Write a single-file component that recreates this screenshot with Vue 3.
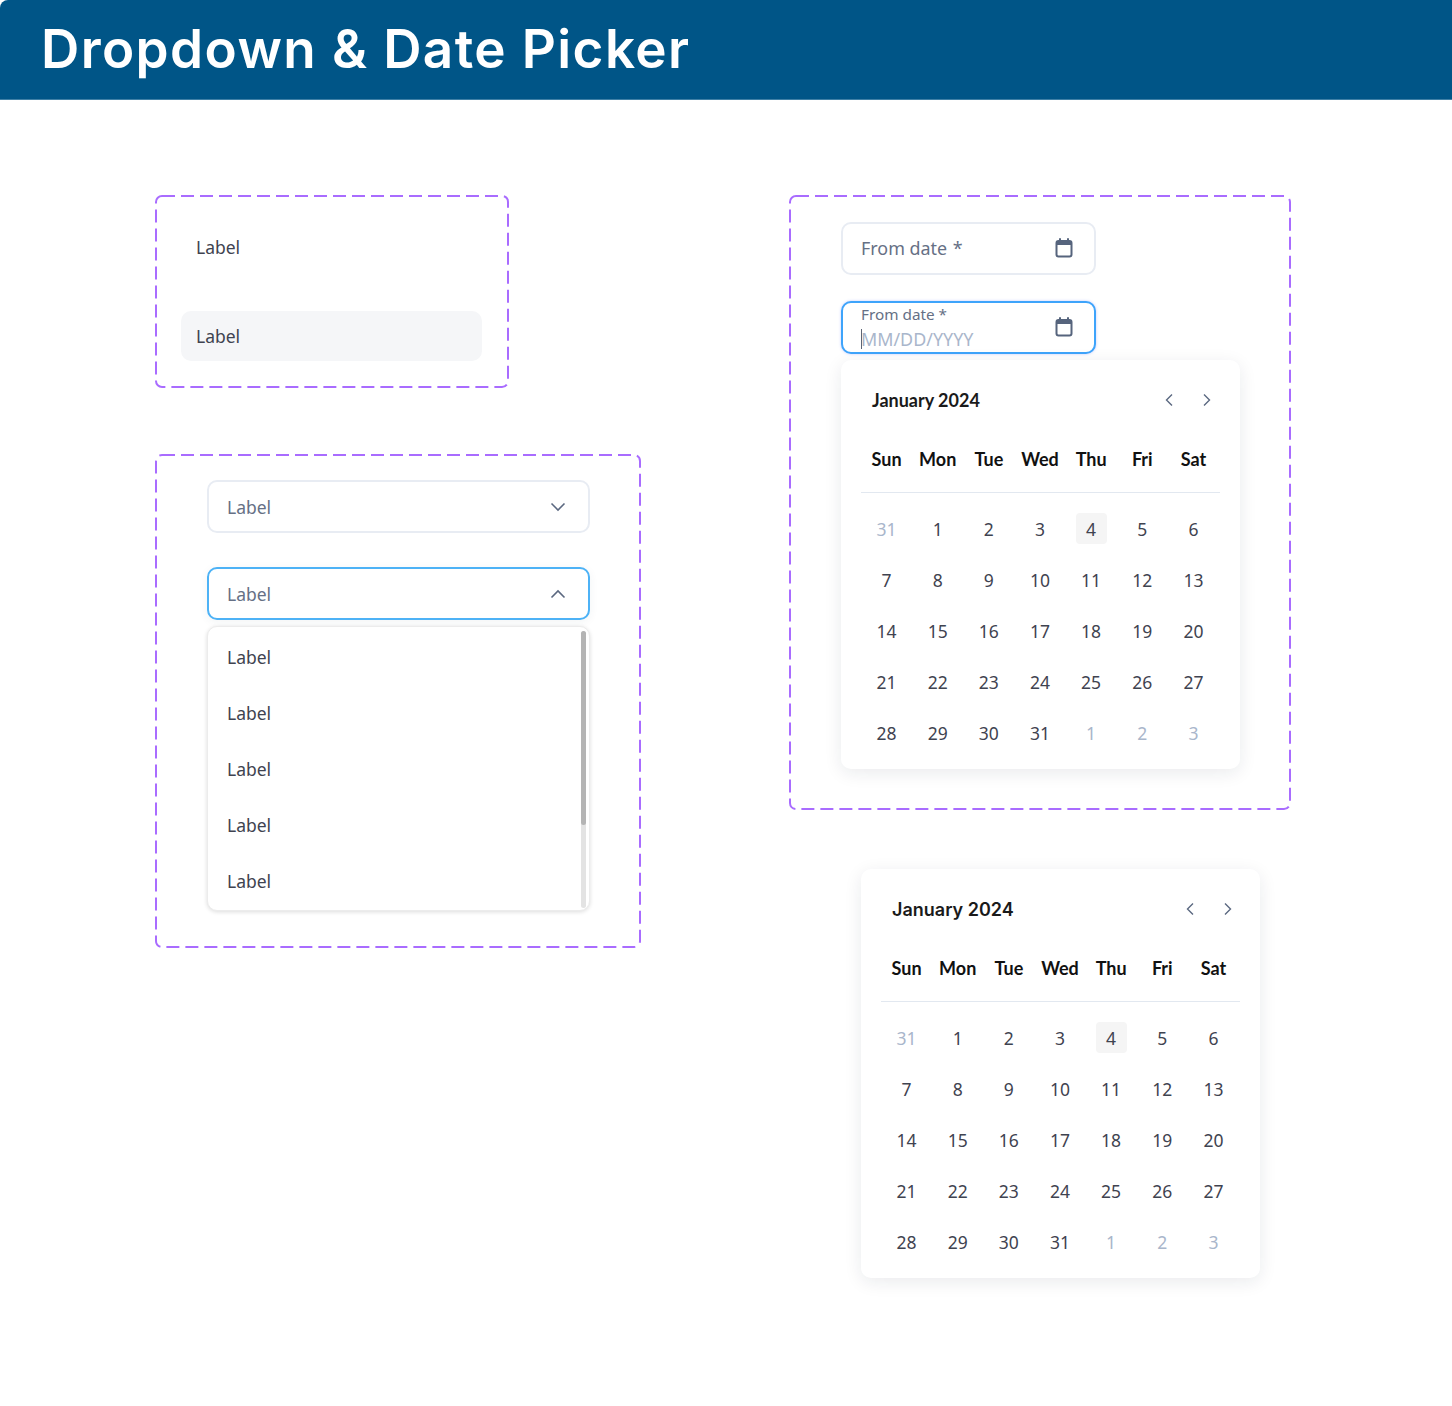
<script setup>
const weekdays = ["Sun", "Mon", "Tue", "Wed", "Thu", "Fri", "Sat"];

// january 2024, padded with the neighbouring months
const days = [];
days.push({ n: 31, muted: true });
for (let n = 1; n <= 31; n++) days.push({ n, today: n === 4 });
for (let n = 1; n <= 3; n++) days.push({ n, muted: true });

const options = ["Label", "Label", "Label", "Label", "Label"];
</script>

<template>
  <div class="page">
    <header class="banner">
      <h1>Dropdown &amp; Date Picker</h1>
    </header>

    <main class="board">
      <div class="col-left">
        <section class="frame menu-frame">
          <svg class="dash"><rect /></svg>
          <div class="menu-item">Label</div>
          <div class="menu-item hover">Label</div>
        </section>

        <section class="frame select-frame">
          <svg class="dash"><rect /></svg>
          <div class="select">
            <span>Label</span>
            <svg width="16" height="10" viewBox="0 0 16 10" fill="none">
              <path d="M1.5 1.5 8 8l6.5-6.5" stroke="#5b6880" stroke-width="1.6" />
            </svg>
          </div>
          <div class="select open">
            <span>Label</span>
            <svg width="16" height="10" viewBox="0 0 16 10" fill="none">
              <path d="M1.5 8.5 8 2l6.5 6.5" stroke="#5b6880" stroke-width="1.6" />
            </svg>
          </div>
          <div class="list">
            <div v-for="(opt, i) in options" :key="i" class="list-row">{{ opt }}</div>
            <div class="scroll-track"><div class="scroll-thumb"></div></div>
          </div>
        </section>
      </div>

      <div class="col-right">
        <section class="frame date-frame">
          <svg class="dash"><rect /></svg>
          <div class="date-input">
            <span class="date-label">From date <i>*</i></span>
            <svg class="cal-icon" width="20" height="20" viewBox="0 0 20 20" fill="none">
              <path d="M6 1v3M14 1v3" stroke="#56647d" stroke-width="2" stroke-linecap="round" />
              <rect x="2.500" y="3" width="15" height="15.500" rx="2" stroke="#56647d" stroke-width="2" />
              <path d="M2.500 5a2 2 0 0 1 2-2h11a2 2 0 0 1 2 2v2h-15z" fill="#56647d" />
            </svg>
          </div>
          <div class="date-input focused">
            <div class="date-stack">
              <span class="date-label small">From date <i>*</i></span>
              <span class="date-placeholder"><b class="caret"></b>MM/DD/YYYY</span>
            </div>
            <svg class="cal-icon" width="20" height="20" viewBox="0 0 20 20" fill="none">
              <path d="M6 1v3M14 1v3" stroke="#56647d" stroke-width="2" stroke-linecap="round" />
              <rect x="2.500" y="3" width="15" height="15.500" rx="2" stroke="#56647d" stroke-width="2" />
              <path d="M2.500 5a2 2 0 0 1 2-2h11a2 2 0 0 1 2 2v2h-15z" fill="#56647d" />
            </svg>
          </div>

          <div class="calendar">
            <div class="cal-head">
              <span class="cal-title">January 2024</span>
              <div class="cal-nav">
                <svg width="10" height="14" viewBox="0 0 10 14" fill="none"><path d="M8 1.500 2.500 7 8 12.500" stroke="#5b6880" stroke-width="1.400" /></svg>
                <svg width="10" height="14" viewBox="0 0 10 14" fill="none"><path d="M2 1.500 7.500 7 2 12.500" stroke="#5b6880" stroke-width="1.400" /></svg>
              </div>
            </div>
            <div class="cal-week">
              <span v-for="d in weekdays" :key="d">{{ d }}</span>
            </div>
            <div class="cal-days">
              <div v-for="(d, i) in days" :key="i" class="cal-day">
                <span :class="{ muted: d.muted, today: d.today }">{{ d.n }}</span>
              </div>
            </div>
          </div>
        </section>

        <div class="calendar standalone">
          <div class="cal-head">
            <span class="cal-title alt">January 2024</span>
            <div class="cal-nav">
              <svg width="10" height="14" viewBox="0 0 10 14" fill="none"><path d="M8 1.500 2.500 7 8 12.500" stroke="#5b6880" stroke-width="1.400" /></svg>
              <svg width="10" height="14" viewBox="0 0 10 14" fill="none"><path d="M2 1.500 7.500 7 2 12.500" stroke="#5b6880" stroke-width="1.400" /></svg>
            </div>
          </div>
          <div class="cal-week">
            <span v-for="d in weekdays" :key="d">{{ d }}</span>
          </div>
          <div class="cal-days">
            <div v-for="(d, i) in days" :key="i" class="cal-day">
              <span :class="{ muted: d.muted, today: d.today }">{{ d.n }}</span>
            </div>
          </div>
        </div>
      </div>
    </main>
  </div>
</template>

<style>
html,
body {
  background: #fff;
}
</style>

<style scoped>
.page {
  width: 1452px;
  height: 1406px;
  overflow: hidden;
  font-family: "Noto Sans", "Open Sans", sans-serif;
  font-size: 17.5px;
  color: #3f4350;
}

.banner {
  height: 100px;
  box-sizing: border-box;
  padding: 0 0 2px 41px;
  display: flex;
  align-items: center;
  background: #005587;
  border-top-left-radius: 8px;
  border-bottom: 1px solid #3f80a6;
}

.banner h1 {
  margin: 0;
  font-family: Inter, sans-serif;
  font-size: 53px;
  font-weight: 600;
  letter-spacing: 1.400px;
  color: #fff;
}

.board {
  display: flex;
  padding: 95px 0 0 155px;
}

.col-left {
  width: 486px;
  margin-right: 148px;
  display: flex;
  flex-direction: column;
  gap: 66px;
  align-items: flex-start;
}

.col-right {
  width: 502px;
}

.frame {
  position: relative;
  box-sizing: border-box;
}

.dash {
  position: absolute;
  inset: 0;
  width: 100%;
  height: 100%;
  pointer-events: none;
}

.dash rect {
  x: 1px;
  y: 1px;
  width: calc(100% - 2px);
  height: calc(100% - 2px);
  rx: 6px;
  fill: none;
  stroke: #a96cff;
  stroke-width: 2px;
  stroke-dasharray: 13 6;
}

/* menu items */
.menu-frame {
  width: 354px;
  padding: 27px 27px 27px 26px;
  display: flex;
  flex-direction: column;
  gap: 39px;
}

.menu-item {
  height: 50px;
  padding-left: 15px;
  display: flex;
  align-items: center;
  border-radius: 10px;
}

.menu-item.hover {
  background: #f5f6f8;
}

/* select */
.select-frame {
  width: 486px;
  padding: 26px 51px 37px 52px;
}

.select {
  height: 53px;
  box-sizing: border-box;
  padding: 0 22px 0 18px;
  display: flex;
  align-items: center;
  justify-content: space-between;
  background: #fff;
  border: 2px solid #e8ecf3;
  border-radius: 10px;
  color: #667085;
}

.select.open {
  margin-top: 34px;
  border-color: #4db2f6;
  box-shadow: 0 2px 10px rgba(30, 60, 90, 0.06);
}

.list {
  position: relative;
  height: 285px;
  margin-top: 6px;
  padding-top: 2px;
  box-sizing: border-box;
  background: #fff;
  border-radius: 10px;
  border: 1px solid #ececec;
  box-shadow: 0 1px 4px rgba(0, 0, 0, 0.14);
}

.list-row {
  height: 56px;
  padding-left: 19px;
  display: flex;
  align-items: center;
}

.scroll-track {
  position: absolute;
  top: 4px;
  right: 3px;
  bottom: 2px;
  width: 5px;
  border-radius: 3px;
  background: #e3e3e3;
}

.scroll-thumb {
  height: 194px;
  border-radius: 3px;
  background: #b4b4b4;
}

/* date inputs */
.date-frame {
  width: 502px;
  padding: 27px 51px 41px 52px;
}

.date-input {
  width: 255px;
  height: 53px;
  box-sizing: border-box;
  padding: 0 20px 0 18px;
  display: flex;
  align-items: center;
  justify-content: space-between;
  background: #fff;
  border: 2px solid #e8ecf3;
  border-radius: 10px;
}

.date-input.focused {
  margin-top: 26px;
  border-color: #3ea4fb;
  box-shadow: 0 0 3px rgba(90, 110, 255, 0.35);
}

.date-label {
  color: #667085;
  font-size: 17.900px;
  margin-top: -2px;
}

.date-label i {
  font-style: normal;
  margin-left: 1px;
}

.date-label.small {
  font-size: 15.300px;
  line-height: 20px;
  margin-top: 0;
}

.date-label.small i {
  margin-left: 0;
}

.date-stack {
  display: flex;
  flex-direction: column;
  gap: 3px;
}

.date-placeholder {
  height: 24px;
  display: flex;
  align-items: center;
  font-size: 17.900px;
  color: #a9b6cb;
}

.caret {
  width: 1px;
  height: 20px;
  margin-right: -1px;
  background: #5c6474;
}

.cal-icon {
  display: block;
  margin-top: -1px;
}

/* calendar */
.calendar {
  width: 399px;
  box-sizing: border-box;
  margin-top: 6px;
  padding: 20px 20px 11px;
  background: #fff;
  border-radius: 10px;
  box-shadow: 0 4px 18px rgba(20, 30, 50, 0.09);
}

.calendar.standalone {
  margin: 59px 0 0 72px;
}

.standalone .cal-head {
  padding-right: 7px;
}

.cal-head {
  height: 40px;
  padding: 0 8px 0 11px;
  display: flex;
  align-items: center;
  justify-content: space-between;
}

.cal-title {
  font-family: Lato, sans-serif;
  font-size: 18px;
  font-weight: 700;
  color: #1a1a1a;
}

.cal-title.alt {
  font-family: Inter, sans-serif;
  font-weight: 600;
  font-size: 18px;
}

.cal-nav {
  display: flex;
  gap: 28px;
}

.cal-nav svg {
  display: block;
}

.cal-week {
  margin-top: 13px;
  height: 51px;
  padding: 0 1px 8px 0;
  display: grid;
  grid-template-columns: repeat(7, 1fr);
  align-items: center;
  text-align: center;
  border-bottom: 1.500px solid #e2e8f0;
  font-family: Lato, sans-serif;
  font-weight: 700;
  font-size: 18px;
  color: #111;
}

.cal-days {
  margin-top: 10px;
  padding-right: 1px;
  display: grid;
  grid-template-columns: repeat(7, 1fr);
  grid-auto-rows: 51px;
}

.cal-day {
  display: flex;
  align-items: center;
  justify-content: center;
}

.cal-day span {
  width: 31px;
  height: 31px;
  display: flex;
  align-items: center;
  justify-content: center;
  border-radius: 4px;
}

.cal-day .muted {
  color: #a9b6cb;
}

.cal-day .today {
  background: #f5f5f5;
}
</style>
